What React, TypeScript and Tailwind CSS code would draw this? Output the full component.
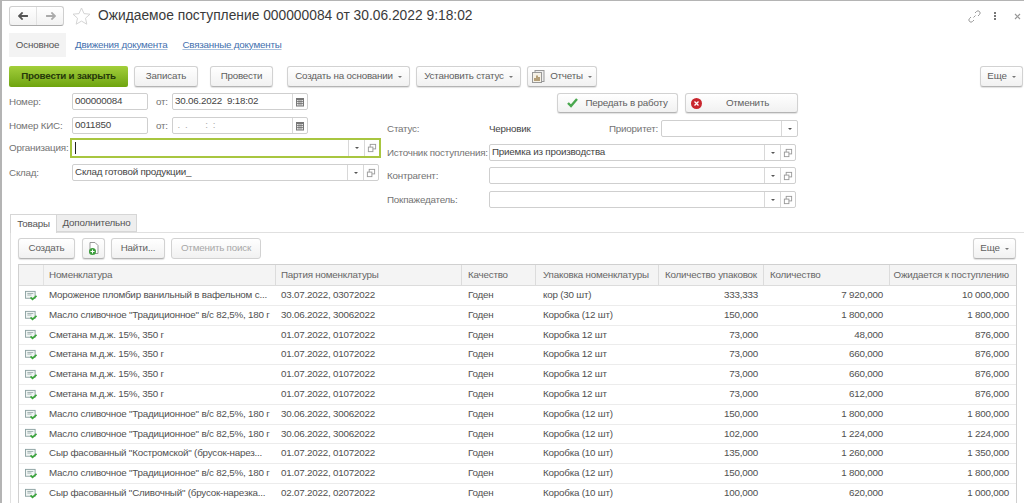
import React from "react";

const btn =
  "flex items-center justify-center h-[21px] rounded-[3px] border border-[#d2d2d2] border-b-[#b4b4b4] bg-gradient-to-b from-white to-[#f1f1f1] text-[#5f5f5f] shadow-[0_1px_1px_rgba(0,0,0,0.12)]";

const rows = [
  ["Мороженое пломбир ванильный в вафельном с...", "03.07.2022, 03072022", "кор (30 шт)", "333,333", "7 920,000", "10 000,000"],
  ['Масло сливочное "Традиционное" в/с 82,5%, 180 г', "30.06.2022, 30062022", "Коробка (12 шт)", "150,000", "1 800,000", "1 800,000"],
  ["Сметана м.д.ж. 15%, 350 г", "01.07.2022, 01072022", "Коробка 12 шт", "73,000", "48,000", "876,000"],
  ["Сметана м.д.ж. 15%, 350 г", "01.07.2022, 01072022", "Коробка 12 шт", "73,000", "660,000", "876,000"],
  ["Сметана м.д.ж. 15%, 350 г", "01.07.2022, 01072022", "Коробка 12 шт", "73,000", "660,000", "876,000"],
  ["Сметана м.д.ж. 15%, 350 г", "01.07.2022, 01072022", "Коробка 12 шт", "73,000", "612,000", "876,000"],
  ['Масло сливочное "Традиционное" в/с 82,5%, 180 г', "30.06.2022, 30062022", "Коробка (12 шт)", "150,000", "1 800,000", "1 800,000"],
  ['Масло сливочное "Традиционное" в/с 82,5%, 180 г', "30.06.2022, 30062022", "Коробка (12 шт)", "102,000", "1 224,000", "1 224,000"],
  ['Сыр фасованный "Костромской" (брусок-нарез...', "01.07.2022, 01072022", "Коробка (10 шт)", "135,000", "1 260,000", "1 350,000"],
  ['Масло сливочное "Традиционное" в/с 82,5%, 180 г', "01.07.2022, 01072022", "Коробка (12 шт)", "150,000", "1 800,000", "1 800,000"],
  ['Сыр фасованный "Сливочный" (брусок-нарезка...', "02.07.2022, 02072022", "Коробка (10 шт)", "100,000", "620,000", "1 000,000"],
];

const gridCols = "grid grid-cols-[25px_232px_186px_74px_123px_105px_126px_126px]";

function Caret() {
  return <span className="ml-[5px] mb-[-1px] inline-block border-x-[2px] border-t-[2.5px] border-x-transparent border-t-[#777]" />;
}

function CopyIcon() {
  return (
    <svg width="10" height="10" viewBox="0 0 11 11" fill="none" stroke="#999" strokeWidth="1">
      <rect x="3.5" y="1.5" width="6" height="5" />
      <rect x="1.5" y="4.5" width="5" height="5" fill="white" />
    </svg>
  );
}

function CalendarIcon() {
  return (
    <svg width="10" height="10" viewBox="0 0 10 10">
      <rect x="1" y="1" width="8" height="8.5" fill="#777" />
      <rect x="2" y="3" width="6" height="5.5" fill="#e4e4e4" />
      <path d="M2 4.5h6M2 6.5h6M4 3v5.5M6 3v5.5" stroke="#666" strokeWidth="0.7" />
    </svg>
  );
}

function DocCheck() {
  return (
    <svg width="12" height="11" viewBox="0 0 13 12" fill="none">
      <rect x="0.5" y="1.5" width="10.5" height="7.5" fill="#f1f6f4" stroke="#8aa0a0" />
      <path d="M2.5 3.8h6.5M2.5 5.5h4.5" stroke="#93a5a5" strokeWidth="0.9" />
      <path d="M6 8l2.2 2.2L12.5 6.3" stroke="#3aa53a" strokeWidth="1.9" />
    </svg>
  );
}

function Field({ text, width, cursor, focused, pick = true, open = true, calendar, muted }: { text?: string; width: string; cursor?: boolean; focused?: boolean; pick?: boolean; open?: boolean; calendar?: boolean; muted?: boolean }) {
  return (
    <div className={`flex items-stretch bg-white ${width} ${focused ? "h-[20px] -ml-[2px] border-2 border-[#a8c640]" : "h-[17px] rounded-[2px] border border-[#cfcfcf]"}`}>
      <div className={`flex-1 flex items-center pl-[2px] whitespace-pre ${muted ? "text-[#aaa]" : "text-[#444]"}`}>
        {cursor && <span className="w-px h-[12px] ml-px bg-[#222]" />}
        {text}
      </div>
      {calendar && <div className="w-[15px] flex items-center justify-center border-l border-[#d8d8d8]"><CalendarIcon /></div>}
      {pick && <div className="w-[16px] flex items-center justify-center border-l border-[#d8d8d8]"><span className="border-x-[2px] border-t-[2.5px] border-x-transparent border-t-[#555]" /></div>}
      {open && <div className="w-[15px] flex items-center justify-center border-l border-[#d8d8d8]"><CopyIcon /></div>}
    </div>
  );
}

function Label({ children, width }: { children: React.ReactNode; width: string }) {
  return <div className={`text-[#737373] whitespace-nowrap pt-px ${width}`}>{children}</div>;
}

export default function App() {
  return (
    <div className="w-[1024px] h-[503px] overflow-hidden border-t border-l-2 border-[#b4b4b4] bg-white text-[9.8px] tracking-[-0.2px] font-['Liberation_Sans',Arial,sans-serif]">
      {/* title */}
      <div className="flex items-center h-[24px] mt-[3px] pl-[7px]">
        <div className="flex h-[20px] w-[55px] rounded-[3px] border border-[#cfcfcf] border-b-[#aaa] bg-gradient-to-b from-white to-[#f2f2f2]">
          <div className="flex-1 flex items-center justify-center border-r border-[#e2e2e2]">
            <svg width="11" height="8" viewBox="0 0 12 9"><path d="M5 0.5L1 4.5l4 4M1.5 4.5H11" fill="none" stroke="#555" strokeWidth="2" /></svg>
          </div>
          <div className="flex-1 flex items-center justify-center">
            <svg width="11" height="8" viewBox="0 0 12 9"><path d="M7 0.5l4 4-4 4M10.5 4.5H1" fill="none" stroke="#aaa" strokeWidth="2" /></svg>
          </div>
        </div>
        <svg className="ml-[8px]" width="19" height="18" viewBox="0 0 19 18"><path d="M9.5 1l2.5 5.6 6 .6-4.5 4 1.3 6-5.3-3.1-5.3 3.1 1.3-6L1 7.2l6-.6z" fill="white" stroke="#d4d4d4" /></svg>
        <div className="ml-[7px] text-[13.8px] tracking-normal text-[#3a3a3a] whitespace-nowrap">Ожидаемое поступление 000000084 от 30.06.2022 9:18:02</div>
        <div className="ml-auto flex items-center pr-[3px]">
          <svg width="13" height="13" viewBox="0 0 13 13" fill="none" stroke="#999" strokeWidth="1"><path d="M5.5 7.5l2-2M7 3l1.5-1.5a2.1 2.1 0 013 3L10 6M6 10l-1.5 1.5a2.1 2.1 0 01-3-3L3 7" /></svg>
          <div className="ml-[13px] flex flex-col gap-px"><span className="w-[2px] h-[2px] bg-[#777]" /><span className="w-[2px] h-[2px] bg-[#777]" /><span className="w-[2px] h-[2px] bg-[#777]" /></div>
          <svg className="ml-[18px]" width="7" height="7" viewBox="0 0 7 7"><path d="M1 1l5 5M6 1L1 6" stroke="#999" strokeWidth="1.2" /></svg>
        </div>
      </div>

      {/* form tabs */}
      <div className="flex items-center h-[24px] mt-[5px] pl-[7px]">
        <div className="flex items-center justify-center w-[57px] h-[24px] bg-[#f3f3f3] text-[#555]">Основное</div>
        <a className="ml-[9px] text-[#3f6fae] underline decoration-[#a9c0dc]">Движения документа</a>
        <a className="ml-[15px] text-[#3f6fae] underline decoration-[#a9c0dc]">Связанные документы</a>
      </div>

      {/* command bar */}
      <div className="flex h-[21px] mt-[9px] pl-[7px]">
        <div className="flex items-center justify-center w-[119px] h-[21px] rounded-[2px] bg-gradient-to-b from-[#a3cf3a] to-[#6ea40d] font-bold text-[#26380a]">Провести и закрыть</div>
        <div className={`${btn} w-[64px] ml-[6px]`}>Записать</div>
        <div className={`${btn} w-[63px] ml-[12px]`}>Провести</div>
        <div className={`${btn} w-[123px] ml-[14px]`}>Создать на основании<Caret /></div>
        <div className={`${btn} w-[105px] ml-[6px]`}>Установить статус<Caret /></div>
        <div className={`${btn} w-[70px] ml-[6px]`}>
          <svg className="mr-[5px]" width="13" height="13" viewBox="0 0 13 13"><rect x="3" y="0.5" width="9" height="11" fill="#eee" stroke="#999" /><rect x="0.5" y="2.5" width="9" height="10" fill="#f5f1e6" stroke="#999" /><path d="M3 11V8M5 11V5.5M7 11V7" stroke="#9a7d4a" strokeWidth="1.4" /></svg>
          Отчеты<Caret />
        </div>
        <div className={`${btn} w-[43px] ml-auto mr-[1px]`}>Еще<Caret /></div>
      </div>

      {/* header fields */}
      <div className="flex h-[121px] mt-[6px] pl-[7px]">
        <div className="w-[378px] flex flex-col">
          <div className="flex items-center h-[17px]">
            <Label width="w-[63px]">Номер:</Label>
            <Field text="000000084" width="w-[76px]" pick={false} open={false} />
            <Label width="w-[24px] pl-[8px]">от:</Label>
            <Field text="30.06.2022  9:18:02" width="w-[136px]" pick={false} open={false} calendar />
          </div>
          <div className="flex items-center h-[17px] mt-[7px]">
            <Label width="w-[63px]">Номер КИС:</Label>
            <Field text="0011850" width="w-[76px]" pick={false} open={false} />
            <Label width="w-[24px] pl-[8px]">от:</Label>
            <Field text=" .  .       :  :" muted width="w-[136px]" pick={false} open={false} calendar />
          </div>
          <div className="flex items-center h-[20px] mt-[4px]">
            <Label width="w-[63px]">Организация:</Label>
            <Field cursor focused width="w-[311px]" />
          </div>
          <div className="flex items-center h-[17px] mt-[6px]">
            <Label width="w-[63px]">Склад:</Label>
            <Field text="Склад готовой продукции_" width="w-[307px]" />
          </div>
        </div>
        <div className="flex flex-col w-[411px]">
          <div className="flex justify-end h-[20px] gap-[7px]">
            <div className={`${btn} !h-[20px] w-[121px]`}>
              <svg className="mr-[7px]" width="11" height="10" viewBox="0 0 11 10"><path d="M1 5l3 3 6-7" fill="none" stroke="#4aa84f" strokeWidth="2.4" /></svg>
              Передать в работу
            </div>
            <div className={`${btn} !h-[20px] w-[113px] relative`}>
              <svg className="absolute left-[5px] top-[4px]" width="11" height="11" viewBox="0 0 11 11"><circle cx="5.5" cy="5.5" r="5.5" fill="#c9262e" /><path d="M3.5 3.5l4 4M7.5 3.5l-4 4" stroke="white" strokeWidth="1.3" /></svg>
              <span className="pl-[12px]">Отменить</span>
            </div>
          </div>
          <div className="flex items-center h-[17px] mt-[7px]">
            <Label width="w-[102px]">Статус:</Label>
            <div className="w-[120px] pt-px text-[#444]">Черновик</div>
            <div className="w-[52px] pr-[3px] pt-px text-[#737373] text-right whitespace-nowrap">Приоритет:</div>
            <Field width="w-[137px]" open={false} />
          </div>
          <div className="flex items-center h-[17px] mt-[7px]">
            <Label width="w-[102px]">Источник поступления:</Label>
            <Field text="Приемка из производства" width="w-[307px]" />
          </div>
          <div className="flex items-center h-[17px] mt-[6px]">
            <Label width="w-[102px]">Контрагент:</Label>
            <Field width="w-[307px]" />
          </div>
          <div className="flex items-center h-[17px] mt-[7px]">
            <Label width="w-[102px]">Покпажедатель:</Label>
            <Field width="w-[307px]" />
          </div>
        </div>
      </div>

      {/* table tabs */}
      <div className="flex h-[19px] ml-[8px] relative z-10">
        <div className="flex items-center justify-center w-[47px] h-[19px] border border-b-0 border-[#d6d6d6] bg-white text-[#555]">Товары</div>
        <div className="flex items-center justify-center w-[80px] h-[18px] border border-l-0 border-[#d6d6d6] bg-[#eeeeee] text-[#555]">Дополнительно</div>
      </div>
      <div className="ml-[8px] -mt-px h-[300px] border border-[#e0e0e0] border-r-0 pl-[7px] pt-[5px] pr-[8px]">
        <div className="flex h-[21px]">
          <div className={`${btn} w-[57px]`}>Создать</div>
          <div className={`${btn} w-[23px] ml-[7px]`}>
            <svg width="12" height="15" viewBox="0 0 12 15"><path d="M2 1.5h5l3 3v8H2z" fill="white" stroke="#999" /><circle cx="4.5" cy="10.5" r="3.5" fill="#3d9e3d" /><path d="M4.5 8.5v4M2.5 10.5h4" stroke="white" /></svg>
          </div>
          <div className={`${btn} w-[54px] ml-[6px]`}>Найти...</div>
          <div className={`${btn} w-[90px] ml-[6px] !text-[#a8a8a8] !shadow-none !border-b-[#d2d2d2]`}>Отменить поиск</div>
          <div className={`${btn} w-[43px] ml-auto`}>Еще<Caret /></div>
        </div>
        <div className="w-[999px] mt-[5px] border border-[#d0d0d0]">
          <div className={`${gridCols} h-[21px] bg-[#f4f4f4] border-b border-[#dcdcdc] text-[#666]`}>
            <div className="border-r border-[#e2e2e2]" />
            <div className="flex items-center pl-[5px] border-r border-[#dcdcdc]">Номенклатура</div>
            <div className="flex items-center pl-[5px] border-r border-[#dcdcdc]">Партия номенклатуры</div>
            <div className="flex items-center pl-[6px] border-r border-[#dcdcdc]">Качество</div>
            <div className="flex items-center pl-[7px] border-r border-[#dcdcdc] whitespace-nowrap">Упаковка номенклатуры</div>
            <div className="flex items-center pl-[6px] border-r border-[#dcdcdc] whitespace-nowrap">Количество упаковок</div>
            <div className="flex items-center pl-[6px] border-r border-[#dcdcdc]">Количество</div>
            <div className="flex items-center justify-end pr-[7px] whitespace-nowrap">Ожидается к поступлению</div>
          </div>
          {rows.map((r, i) => (
            <div key={i} className={`${gridCols} h-[19.8px] border-b border-[#ececec] text-[#505050]`}>
              <div className="flex items-center pl-[6px]"><DocCheck /></div>
              <div className="flex items-center pl-[5px] whitespace-nowrap overflow-hidden">{r[0]}</div>
              <div className="flex items-center pl-[5px]">{r[1]}</div>
              <div className="flex items-center pl-[6px]">Годен</div>
              <div className="flex items-center pl-[7px]">{r[2]}</div>
              <div className="flex items-center justify-end pr-[6px]">{r[3]}</div>
              <div className="flex items-center justify-end pr-[7px]">{r[4]}</div>
              <div className="flex items-center justify-end pr-[7px]">{r[5]}</div>
            </div>
          ))}
        </div>
      </div>
    </div>
  );
}
